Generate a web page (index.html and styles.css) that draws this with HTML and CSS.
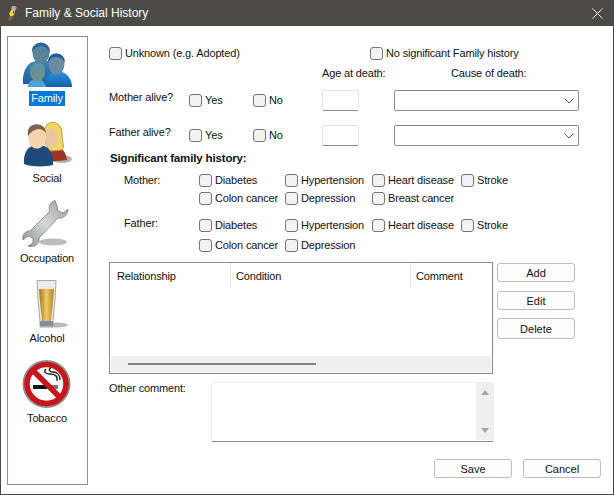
FILE: index.html
```html
<!DOCTYPE html>
<html lang="en">
  <head>
    <meta charset="UTF-8" />
    <title>Family &amp; Social History</title>
    <link rel="stylesheet" href="styles.css">
  </head>
  <body>
    <div class="window">
      <header class="titlebar">
        <svg class="app-icon" width="14" height="18" viewBox="0 0 14 18">
          <path d="M6 2 L10 2 L10 6 L8 7 L5 6 Z" fill="#b5afa8" />
          <path d="M5 6 L9 7 L8 11 L5 13 L3 10 Z" fill="#ecd23c" />
          <path d="M6 12 L7 14 L3 17 L2 16 L4 12 Z" fill="#8a6a45" />
          <path d="M9 2 L12 3.500 L10 5 Z" fill="#d8412a" />
          <path d="M7.500 7 L8.500 8 L7 10 Z" fill="#2a2a28" />
        </svg>
        <span class="title">Family &amp; Social History</span>
        <svg class="close" width="11" height="11" viewBox="0 0 11 11">
          <path d="M0.500 0.500 L10.500 10.500 M10.500 0.500 L0.500 10.500" stroke="#fff" stroke-width="1" />
        </svg>
      </header>

      <div class="content">
        <nav class="sidebar">
          <div class="nav-item">
            <svg width="50" height="50" viewBox="0 0 50 50">
              <defs>
                <linearGradient id="blueBody" x1="0" y1="0" x2="0" y2="1">
                  <stop offset="0" stop-color="#3a87c0" />
                  <stop offset="1" stop-color="#1d5f95" />
                </linearGradient>
                <linearGradient id="brightBody" x1="0" y1="0" x2="0" y2="1">
                  <stop offset="0" stop-color="#2d8ddc" />
                  <stop offset="1" stop-color="#1560ac" />
                </linearGradient>
              </defs>
              <path d="M1 44 C0 30 6 22 14 21 L26 21 C31 24 33 34 30 44 Z" fill="url(#blueBody)" />
              <ellipse cx="19" cy="13" rx="8.500" ry="10.500" fill="#5b8597" />
              <path d="M10 13 C8 0 29 -1 28 13 C26 8 22 6 18 6 C14 7 11 9 10 13 Z" fill="#2a6797" />
              <path d="M23 47 C22 38 27 33 34 32 L40 32 C46 34 50 40 50 47 Z" fill="url(#brightBody)" />
              <ellipse cx="34.500" cy="24" rx="8" ry="10.500" fill="#6a8ca2" />
              <path d="M26 23 C25 11 43 10 43 23 C41 18 37 17 34 17 C30 17 28 19 26 23 Z" fill="#1c5b9c" />
              <path d="M6 47 C6 42 9 39 15 39 C20 39 23 42 24 47 Z" fill="#4aa0da" />
              <path d="M11 39 L19 39 L15 43 Z" fill="#7fae74" />
              <ellipse cx="15.500" cy="32" rx="7.500" ry="9.500" fill="#6b9190" />
              <path d="M8 31 C7 21 24 20 23 31 C20 27 12 27 8 31 Z" fill="#5b93a8" />
            </svg>
            <span class="nav-label selected">Family</span>
          </div>
          <div class="nav-item">
            <svg width="50" height="50" viewBox="0 0 50 50">
              <ellipse cx="40" cy="39" rx="10" ry="4" fill="#7d7d7d" opacity="0.6" />
              <path d="M25 27 C32 23 43 26 45 40 L26 42 Z" fill="#a2312c" />
              <path d="M22 14 C22 -2 40 -1 40 14 C40 22 43 26 40 30 L28 31 C24 26 22 22 22 14 Z" fill="#f0d668" stroke="#b89a3a" />
              <ellipse cx="29" cy="18" rx="6.500" ry="9.500" fill="#edc49f" />
              <path d="M2 44 C1 30 8 25 16 25 C26 25 32 32 31 45 C24 47 8 47 2 44 Z" fill="#1d4a78" />
              <ellipse cx="15" cy="17" rx="9" ry="11.500" fill="#f4d3ad" />
              <path d="M6 16 C3 1 24 1 24 13 C21 9 16 8 13 10 C10 11 8 13 6 16 Z" fill="#7b6350" />
            </svg>
            <span class="nav-label">Social</span>
          </div>
          <div class="nav-item">
            <svg width="50" height="50" viewBox="0 0 50 50">
              <defs>
                <linearGradient id="steel" x1="0" y1="1" x2="1" y2="0">
                  <stop offset="0" stop-color="#8f9492" />
                  <stop offset="0.500" stop-color="#d5d8d6" />
                  <stop offset="1" stop-color="#9a9f9d" />
                </linearGradient>
              </defs>
              <ellipse cx="31" cy="42" rx="14" ry="3.500" fill="#8f8f8f" opacity="0.6" />
              <path d="M33 0.500 C28 2 26 7 28 11 L8 31 C3 31 0 35 1 40 L6 36 L11 38 L11 43 L6 46 C12 48 18 44 17 38 L36 18 C41 19 46 15 46 9 L41 13 L36 11 L35 6 Z" fill="url(#steel)" stroke="#7a7f7d" stroke-width="0.800" />
            </svg>
            <span class="nav-label">Occupation</span>
          </div>
          <div class="nav-item">
            <svg width="50" height="50" viewBox="0 0 50 50">
              <defs>
                <linearGradient id="beer" x1="0" y1="0" x2="1" y2="0">
                  <stop offset="0" stop-color="#a8761c" />
                  <stop offset="0.500" stop-color="#eccb6a" />
                  <stop offset="1" stop-color="#b5831f" />
                </linearGradient>
              </defs>
              <ellipse cx="34" cy="45" rx="12" ry="2.500" fill="#9a9a9a" opacity="0.7" />
              <path d="M15 0.500 L34 0.500 L33 20 L31 41 L31 47 L18 47 L18 41 L16 20 Z" fill="#ecebe6" stroke="#a3a9ac" />
              <path d="M17 9 L32 9 L31 22 L29 41 L20 41 L18 22 Z" fill="url(#beer)" />
              <path d="M18 41 L31 41 L31 46.500 L18 46.500 Z" fill="#7d919e" />
            </svg>
            <span class="nav-label">Alcohol</span>
          </div>
          <div class="nav-item">
            <svg width="50" height="50" viewBox="0 0 50 50">
              <circle cx="24.500" cy="24" r="24" fill="#8f8f8f" />
              <circle cx="24.500" cy="24" r="19.500" fill="#fff" stroke="#c4161b" stroke-width="5.500" />
              <path d="M11 25 H25 V29 H11 Z" fill="#111" />
              <path d="M27 25 H36 V29 H27 Z" fill="#777" />
              <path d="M24 9 C21 12 24 14 28 14 C33 14 36 16 35 21 M29 8 C26 9 27 12 31 12 C35 12 38 15 38 20" fill="none" stroke="#222" stroke-width="1.400" />
              <path d="M11 10.500 L38 37.500" stroke="#c4161b" stroke-width="5.500" />
            </svg>
            <span class="nav-label">Tobacco</span>
          </div>
        </nav>

        <main class="form">
          <div class="row-top">
            <label class="check first"><i></i>Unknown (e.g. Adopted)</label>
            <label class="check"><i></i>No significant Family history</label>
          </div>

          <div class="row-heads">
            <span class="head-age">Age at death:</span>
            <span>Cause of death:</span>
          </div>

          <div class="parent-row">
            <span class="parent-label">Mother alive?</span>
            <label class="check yes"><i></i>Yes</label>
            <label class="check no"><i></i>No</label>
            <span class="age-box"></span>
            <span class="combo">
              <svg width="10" height="6" viewBox="0 0 10 6"><path d="M0.500 0.500 L5 5 L9.500 0.500" fill="none" stroke="#555" /></svg>
            </span>
          </div>
          <div class="parent-row">
            <span class="parent-label">Father alive?</span>
            <label class="check yes"><i></i>Yes</label>
            <label class="check no"><i></i>No</label>
            <span class="age-box"></span>
            <span class="combo">
              <svg width="10" height="6" viewBox="0 0 10 6"><path d="M0.500 0.500 L5 5 L9.500 0.500" fill="none" stroke="#555" /></svg>
            </span>
          </div>

          <h2 class="section-title">Significant family history:</h2>

          <div class="history mother">
            <span class="history-label">Mother:</span>
            <div class="conditions">
              <label class="check"><i></i>Diabetes</label>
              <label class="check"><i></i>Hypertension</label>
              <label class="check"><i></i>Heart disease</label>
              <label class="check"><i></i>Stroke</label>
              <label class="check"><i></i>Colon cancer</label>
              <label class="check"><i></i>Depression</label>
              <label class="check"><i></i>Breast cancer</label>
            </div>
          </div>
          <div class="history father">
            <span class="history-label">Father:</span>
            <div class="conditions">
              <label class="check"><i></i>Diabetes</label>
              <label class="check"><i></i>Hypertension</label>
              <label class="check"><i></i>Heart disease</label>
              <label class="check"><i></i>Stroke</label>
              <label class="check"><i></i>Colon cancer</label>
              <label class="check"><i></i>Depression</label>
            </div>
          </div>

          <div class="table-row">
            <div class="list">
              <div class="list-head">
                <span class="col-rel">Relationship</span>
                <span class="col-cond">Condition</span>
                <span class="col-comment">Comment</span>
              </div>
              <div class="list-body"></div>
              <div class="list-scroll"><span class="thumb"></span></div>
            </div>
            <div class="side-buttons">
              <button type="button">Add</button>
              <button type="button">Edit</button>
              <button type="button" class="tall">Delete</button>
            </div>
          </div>

          <div class="comment-row">
            <span class="comment-label">Other comment:</span>
            <div class="comment-box">
              <div class="vscroll"><b class="up"></b><b class="down"></b></div>
            </div>
          </div>

          <div class="footer">
            <button type="button">Save</button>
            <button type="button">Cancel</button>
          </div>
        </main>
      </div>
    </div>
  </body>
</html>
```

FILE: styles.css
```css
* {
  box-sizing: border-box;
}

html,
body {
  margin: 0;
  height: 100%;
}

body {
  font-family: "Liberation Sans", Arial, sans-serif;
  font-size: 11px;
  letter-spacing: -0.15px;
  color: #111;
  background: #fff;
}

.window {
  width: 614px;
  height: 495px;
  display: flex;
  flex-direction: column;
  border: 1px solid #4b4a47;
  border-top: none;
  overflow: hidden;
}

.titlebar {
  height: 26px;
  flex: none;
  margin: 0 -1px;
  background: #4b4a47;
  color: #fff;
  display: flex;
  align-items: center;
  padding: 0 11px 0 6px;
  font-size: 12px;
  letter-spacing: 0;
}

.app-icon {
  margin-right: 5px;
}

.title {
  flex: 1;
}

.content {
  flex: 1;
  display: flex;
  padding: 10px 0 0 6px;
}

.sidebar {
  width: 81px;
  height: 449px;
  flex: none;
  border: 1px solid #8a8f99;
  display: flex;
  flex-direction: column;
  align-items: center;
  padding: 3px 1px 0 0;
}

.nav-item {
  height: 80px;
  display: flex;
  flex-direction: column;
  align-items: center;
}

.nav-item svg {
  display: block;
  margin-bottom: 1px;
}

.nav-label {
  padding: 0 2px;
  line-height: 15px;
}

.nav-label.selected {
  background: #0078d7;
  color: #fff;
}

.form {
  flex: 1;
  padding: 11px 14px 0 21px;
}

.check {
  display: inline-flex;
  align-items: center;
  gap: 3px;
  line-height: 13px;
  white-space: nowrap;
}

.check i {
  width: 13px;
  height: 13px;
  flex: none;
  background: #f2f2f2;
  border: 1px solid #767676;
  border-radius: 3px;
}

.row-top {
  height: 13px;
  display: flex;
}

.check.first {
  width: 261px;
}

.row-heads {
  display: flex;
  margin-top: 7px;
  padding-left: 213px;
  height: 14px;
}

.head-age {
  width: 129px;
}

.parent-row {
  display: flex;
  align-items: center;
  height: 21px;
  margin-top: 9px;
}

.parent-row + .parent-row {
  margin-top: 14px;
}

.parent-label {
  width: 80px;
  margin-top: -8px;
}

.check.yes {
  width: 64px;
}

.check.no {
  width: 69px;
}

.age-box {
  width: 37px;
  height: 21px;
  border: 1px solid #e3e3e3;
  border-bottom-color: #8a8a8a;
  border-radius: 2px;
  margin-right: 35px;
}

.combo {
  width: 185px;
  height: 21px;
  border: 1px solid #8a8a8a;
  border-radius: 2px;
  display: flex;
  align-items: center;
  justify-content: flex-end;
  padding-right: 4px;
}

.section-title {
  margin: 5px 0 0 1px;
  font-size: 11.500px;
  line-height: 14px;
  font-weight: bold;
}

.history {
  display: flex;
  padding-left: 15px;
}

.history.mother {
  margin-top: 9px;
}

.history.father {
  margin-top: 14px;
}

.history-label {
  width: 75px;
  line-height: 12px;
}

.father .history-label {
  line-height: 8px;
}

.conditions {
  display: grid;
  grid-template-columns: 86px 87px 89px auto;
  row-gap: 5px;
}

.father .conditions {
  row-gap: 7px;
}

.table-row {
  display: flex;
  margin-top: 10px;
  gap: 4px;
}

.list {
  width: 384px;
  height: 112px;
  border: 1px solid #8a8a8a;
  display: flex;
  flex-direction: column;
}

.list-head {
  height: 25px;
  display: flex;
}

.list-head span {
  height: 25px;
  line-height: 27px;
  padding-left: 7px;
  border-right: 1px solid #e5e5e5;
}

.col-rel {
  width: 121px;
}

.list-head .col-cond {
  width: 180px;
  padding-left: 5px;
}

.list-head .col-comment {
  padding-left: 5px;
  border-right: none;
}

.list-body {
  flex: 1;
}

.list-scroll {
  height: 16px;
  margin: 0 1px 1px;
  background: #efefef;
  padding: 7px 0 0 17px;
}

.thumb {
  display: block;
  width: 188px;
  height: 2px;
  background: #858585;
}

.side-buttons {
  display: flex;
  flex-direction: column;
  padding-top: 1px;
  gap: 9px;
}

button {
  font: inherit;
  color: #111;
  width: 78px;
  height: 19px;
  padding: 0;
  background: #fdfdfd;
  border: 1px solid #bcbcbc;
  border-radius: 3px;
}

button.tall {
  height: 21px;
  margin-top: -1px;
}

.comment-row {
  display: flex;
  margin-top: 8px;
}

.comment-label {
  width: 102px;
  line-height: 12px;
}

.comment-box {
  width: 283px;
  height: 60px;
  border: 1px solid #ececec;
  border-bottom: 1px solid #8a8a8a;
  border-radius: 2px;
  display: flex;
  justify-content: flex-end;
}

.vscroll {
  width: 17px;
  height: 57px;
  background: #efefef;
  display: flex;
  flex-direction: column;
  justify-content: space-between;
  align-items: center;
  padding: 7px 0 7px;
}

.vscroll b {
  width: 0;
  height: 0;
  border-left: 4px solid transparent;
  border-right: 4px solid transparent;
}

.vscroll .up {
  border-bottom: 5px solid #a6a6a6;
}

.vscroll .down {
  border-top: 5px solid #a6a6a6;
}

.footer {
  display: flex;
  justify-content: flex-end;
  gap: 11px;
  margin: 17px -2px 0 0;
}
```
